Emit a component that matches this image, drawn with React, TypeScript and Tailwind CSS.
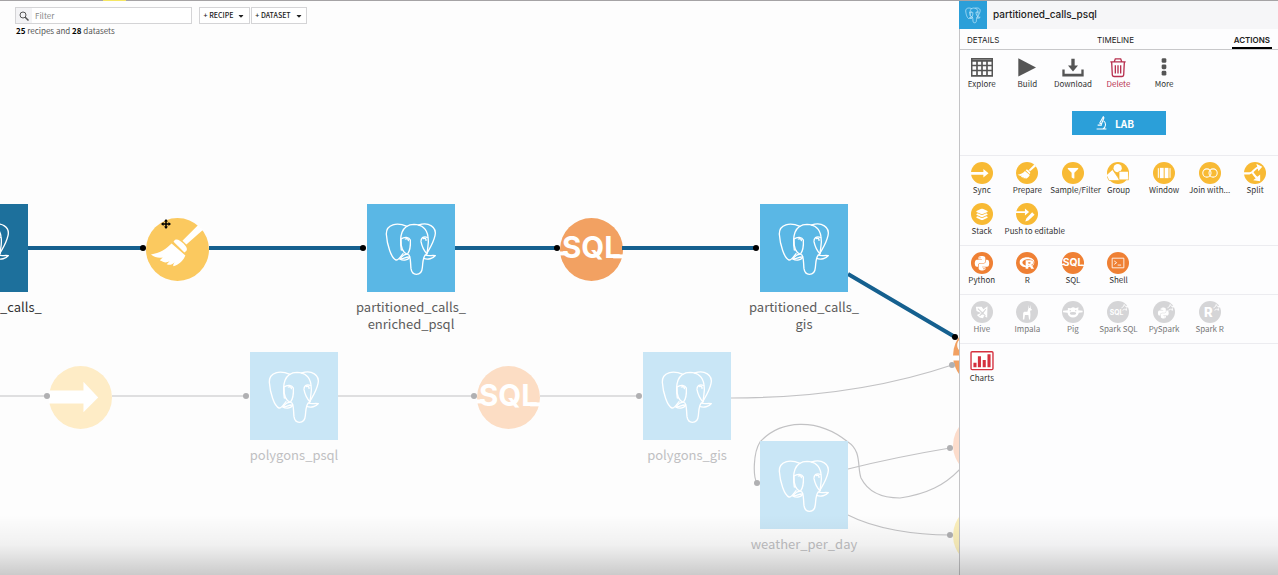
import React from "react";
import { FaPython, FaRProject, FaFilter, FaLayerGroup, FaCaretDown } from "react-icons/fa";

const cjk = "font-['Noto_Sans_CJK_SC','Noto_Sans',sans-serif]";

function Elephant({ className, strokeWidth = 4 }: { className: string; strokeWidth?: number }) {
  return (
    <svg viewBox="81 42 264 264" className={className} fill="none" stroke="currentColor" strokeWidth={strokeWidth} strokeLinecap="round" strokeLinejoin="round" aria-hidden="true">
      <path d="M201 109C172 97 138 101 139 133C141 165 154 205 168 210C176 211 182 199 189 191" />
      <path d="M184 180C178 140 183 104 222 103C248 104 261 120 264 140C268 162 262 176 261 190" />
      <path d="M236 105C266 95 291 111 285 137C279 163 267 178 259 193" />
      <path d="M183 147C194 139 207 141 211 150C212 166 211 182 202 193C188 188 182 174 183 147Z" />
      <path d="M196 147c5-2 10 0 9 5" />
      <path d="M262 142C250 137 242 145 243 155C246 170 252 182 261 192M251 146c4-2 8 0 7 5" />
      <path d="M199 193C189 193 185 201 179 207C190 213 207 211 209 200" />
      <path d="M182 207C190 207 197 202 205 201" />
      <path d="M206 194C213 200 211 220 213 236C215 249 220 253 229 253C241 253 246 247 247 233C249 216 248 204 256 195" />
      <path d="M256 195C265 199 276 195 286 197C279 206 263 210 251 205" />
    </svg>
  );
}

function Broom() {
  return (
    <g fill="#fff">
      <path d="M53 7L37 23L41 27L58 12A32 32 0 0 0 53 7Z" />
      <path d="M28 24C30 20 34 22 38 26C42 30 43 33 39 35Z" />
      <path d="M26 26L40 38C38 43 34 47 28 49C27 48 28 47 29 45C26 48 24 48 21 47L24 44C20 46 18 45 14 43L17 40C13 41 9 40 5 37C14 36 20 32 26 26Z" />
    </g>
  );
}

function SqlGlyph({ color }: { color: string }) {
  return (
    <g fill={color}>
      <text x="32" y="41" textAnchor="middle" fontSize="30" fontWeight="700" className="font-['Inter',sans-serif]">SQL</text>
      <rect x="0" y="34" width="6" height="4" />
      <rect x="54" y="37" width="10" height="4" />
    </g>
  );
}

function Disc({ fill, children, className }: { fill: string; children?: React.ReactNode; className: string }) {
  return (
    <svg viewBox="0 0 64 64" className={className} aria-hidden="true">
      <circle cx="32" cy="32" r="32" fill={fill} />
      {children}
    </svg>
  );
}

const arrow = <path d="M0 25H35V16L50 32L35 47V38H0Z" fill="#fff" />;

function DatasetNode({ place, tile, label, text, align = "items-center" }: { place: string; tile: string; label: string; text: string; align?: string }) {
  return (
    <div className={`absolute flex w-[88px] flex-col ${align} ${place}`}>
      <div className={`size-[88px] ${tile}`}>
        <Elephant className="size-full text-white" />
      </div>
      <p className={`mt-1.5 text-center text-[13px] leading-[17px] whitespace-pre ${cjk} ${text}`}>{label}</p>
    </div>
  );
}

function FlowCanvas() {
  return (
    <div className="absolute inset-0 overflow-hidden">
      <svg className="absolute top-0 left-0 h-[575px] w-[1278px]" fill="none" aria-hidden="true">
        <g stroke="#c2c2c4" strokeWidth="1.2">
          <path d="M0 396H46M112 396H246M338 396H474M540 396H639" />
          <path d="M731 398C820 398 890 386 952 365" />
          <path d="M757 483C753 477 753 453 760 442C780 420 817 417 848 442C862 451 857 467 861 478C868 492 883 498 900 498C927 494 945 485 960 469" />
          <path d="M848 469C880 461 920 453 950 448" />
          <path d="M848 515C875 529 915 535 950 535" />
        </g>
      </svg>
      <Disc fill="#fbc95f" className="absolute top-[218px] left-[146px] size-[63px]"><Broom /></Disc>
      <Disc fill="#f2a162" className="absolute top-[218px] left-[560px] size-[63px]"><SqlGlyph color="#fff" /></Disc>
      <Disc fill="#feecc6" className="absolute top-[366px] left-[49px] size-[63px]">{arrow}</Disc>
      <Disc fill="#fcddc4" className="absolute top-[366px] left-[477px] size-[63px]"><SqlGlyph color="#fff" /></Disc>
      <Disc fill="#f2a162" className="absolute top-[324px] left-[953px] size-[63px]">
        <path d="M0 32H8V37H0ZM8 15C3 18 3 25 8 28Z" fill="#fff" />
      </Disc>
      <Disc fill="#fcdccb" className="absolute top-[414px] left-[953px] size-[63px]" />
      <Disc fill="#fbefbb" className="absolute top-[504px] left-[953px] size-[63px]" />
      <svg className="absolute top-0 left-0 h-[575px] w-[1278px]" fill="none" aria-hidden="true">
        <g stroke="#15608f" strokeWidth="4">
          <path d="M27 248H143M209 248H363M455 248H557M622 248H756M848 274L955 337" />
        </g>
        <g fill="#000">
          <circle cx="143" cy="248" r="3" />
          <circle cx="363" cy="248" r="3" />
          <circle cx="557" cy="248" r="3" />
          <circle cx="756" cy="248" r="3" />
          <circle cx="955" cy="337" r="3" />
        </g>
        <g fill="#b0b0b2">
          <circle cx="47" cy="396" r="3" />
          <circle cx="246" cy="396" r="3" />
          <circle cx="474" cy="396" r="3" />
          <circle cx="639" cy="396" r="3" />
          <circle cx="952" cy="365" r="3" />
          <circle cx="757" cy="483" r="3" />
          <circle cx="950" cy="448" r="3" />
          <circle cx="950" cy="535" r="3" />
        </g>
      </svg>
      <DatasetNode place="top-[204px] left-[-60px]" tile="bg-[#1d709c]" label="_calls_" text="text-[#333] ml-[60px]" align="items-start" />
      <DatasetNode place="top-[204px] left-[367px]" tile="bg-[#5ab7e5]" label={"partitioned_calls_\nenriched_psql"} text="text-[#5c5c5c]" />
      <DatasetNode place="top-[204px] left-[760px]" tile="bg-[#5ab7e5]" label={"partitioned_calls_\ngis"} text="text-[#5c5c5c]" />
      <DatasetNode place="top-[352px] left-[250px]" tile="bg-[#c9e6f6]" label="polygons_psql" text="text-[#c0c0c2]" />
      <DatasetNode place="top-[352px] left-[643px]" tile="bg-[#c9e6f6]" label="polygons_gis" text="text-[#c0c0c2]" />
      <DatasetNode place="top-[441px] left-[760px]" tile="bg-[#c9e6f6]" label="weather_per_day" text="text-[#c0c0c2]" />
      <svg viewBox="0 0 20 20" className="absolute top-[219px] left-[161px] size-[10px]" aria-hidden="true">
        <path d="M10 0L14 5H11.500V8.500H15V6L20 10L15 14V11.500H11.500V15H14L10 20L6 15H8.500V11.500H5V14L0 10L5 6V8.500H8.500V5H6Z" fill="#000" />
      </svg>
    </div>
  );
}

function AddButton({ children, className }: { children: React.ReactNode; className: string }) {
  return (
    <button type="button" className={`flex h-[17px] items-center justify-center gap-1 border border-[#d4d4d6] bg-white text-[7px] font-medium whitespace-nowrap text-[#222] ${cjk} ${className}`}>
      {children}
      <FaCaretDown className="size-2" />
    </button>
  );
}

const amber = "#f8ba34";
const orange = "#ef8034";
const grey = "#d5d5d7";
const disc = "mx-auto size-[22px]";
const tool = "mx-auto h-[21px] w-[22px]";

type Item = { label: string; icon: React.ReactNode };

const mainActions: Item[] = [
  {
    label: "Explore",
    icon: (
      <svg viewBox="0 0 66 60" className={tool} fill="none" stroke="#555" strokeWidth="5" aria-hidden="true">
        <path d="M2 4H64V55H2ZM2 10H64M2 24H64M2 39H64M18 10V55M33 10V55M48 10V55" />
      </svg>
    ),
  },
  {
    label: "Build",
    icon: (
      <svg viewBox="0 0 66 60" className={tool} aria-hidden="true"><path d="M7 2L60 30L7 57Z" fill="#555" /></svg>
    ),
  },
  {
    label: "Download",
    icon: (
      <svg viewBox="0 0 66 60" className={tool} fill="#555" aria-hidden="true">
        <path d="M28 4H38V24H48L33 42L18 24H28ZM1 36H8V49H58V36H65V57H1Z" />
      </svg>
    ),
  },
  {
    label: "Delete",
    icon: (
      <svg viewBox="0 0 66 60" className={tool} fill="none" stroke="#b8304f" strokeWidth="4" aria-hidden="true">
        <path d="M10 13H56M22 12L25 4H41L44 12M14 14L16 53Q17 57 21 57H45Q49 57 50 53L52 14M25 23V48M33 23V48M41 23V48" />
      </svg>
    ),
  },
  {
    label: "More",
    icon: (
      <svg viewBox="0 0 66 60" className={tool} fill="#555" aria-hidden="true">
        <rect x="26" y="2" width="14" height="14" rx="4" /><rect x="26" y="21" width="14" height="14" rx="4" /><rect x="26" y="40" width="14" height="14" rx="4" />
      </svg>
    ),
  },
];

const visualRecipes: Item[] = [
  { label: "Sync", icon: <Disc fill={amber} className={disc}><path d="M0 29H36V20L51 33L36 45V37H0Z" fill="#fff" /></Disc> },
  { label: "Prepare", icon: <Disc fill={amber} className={disc}><Broom /></Disc> },
  { label: "Sample/Filter", icon: <Disc fill={amber} className={disc}><FaFilter x="16" y="17" width="32" height="32" size={32} color="#fff" /></Disc> },
  {
    label: "Group",
    icon: (
      <Disc fill={amber} className={disc}>
        <circle cx="31" cy="18" r="12" fill="#fff" />
        <g fill="#fff" stroke={amber} strokeWidth="2"><path d="M-2 38L16 22L38 54H6Z" /><rect x="35" y="27" width="27" height="25" /></g>
      </Disc>
    ),
  },
  {
    label: "Window",
    icon: (
      <Disc fill={amber} className={disc}>
        <g fill="#fff"><rect x="14" y="18" width="3" height="28" /><rect x="20" y="17" width="11" height="30" /><rect x="34" y="17" width="11" height="30" /><rect x="48" y="18" width="3" height="28" /></g>
      </Disc>
    ),
  },
  {
    label: "Join with...",
    icon: (
      <Disc fill={amber} className={disc}>
        <g fill="none" stroke="#fff" strokeWidth="3"><circle cx="23" cy="32" r="12" /><circle cx="41" cy="32" r="12" /></g>
      </Disc>
    ),
  },
  {
    label: "Split",
    icon: (
      <Disc fill={amber} className={disc}>
        <g fill="none" stroke="#fff" strokeWidth="6"><path d="M0 33H16C28 33 30 15 44 15M25 31C31 39 32 45 42 48" /></g>
        <path d="M36 5L53 14L42 27ZM47 36V56L27 53Z" fill="#fff" />
      </Disc>
    ),
  },
  { label: "Stack", icon: <Disc fill={amber} className={disc}><FaLayerGroup x="15" y="16" width="34" height="34" size={34} color="#fff" /></Disc> },
  {
    label: "Push to editable",
    icon: (
      <Disc fill={amber} className={disc}>
        <path d="M0 24H26V16L38 26L26 36V29H0ZM47 27L54 34L36 51L27 54L30 45Z" fill="#fff" />
      </Disc>
    ),
  },
];

const codeRecipes: Item[] = [
  { label: "Python", icon: <Disc fill={orange} className={disc}><FaPython x="8" y="9" width="48" height="48" size={48} color="#fff" /></Disc> },
  { label: "R", icon: <Disc fill={orange} className={disc}><FaRProject x="10" y="10" width="44" height="44" size={44} color="#fff" /></Disc> },
  { label: "SQL", icon: <Disc fill={orange} className={disc}><SqlGlyph color="#fff" /></Disc> },
  {
    label: "Shell",
    icon: (
      <Disc fill={orange} className={disc}>
        <path d="M15 18H49V46H15ZM21 26L28 31L21 36M31 38H41" fill="none" stroke="#fff" strokeWidth="2.500" />
      </Disc>
    ),
  },
];

const spark = <path d="M42 20L48 16L50 10L54 16L61 16L56 21L57 27L51 24L45 27" fill="none" stroke="#fff" strokeWidth="2.500" />;

const hadoopRecipes: Item[] = [
  {
    label: "Hive",
    icon: (
      <Disc fill={grey} className={disc}>
        <path d="M14 17L31 17L36 24L48 15L47 49L38 43L35 50L25 48L17 41L29 35L16 29Z" fill="#fff" />
        <path d="M20 22L42 43M31 40L43 24M25 43L37 31" stroke={grey} strokeWidth="3" />
      </Disc>
    ),
  },
  {
    label: "Impala",
    icon: (
      <Disc fill={grey} className={disc}>
        <path d="M36 11L38 20H41L44 10L43 22L47 26L41 28L42 39L41 54H38L36 41H26L24 54H20L21 34L24 31H33L36 22Z" fill="#fff" />
      </Disc>
    ),
  },
  {
    label: "Pig",
    icon: (
      <Disc fill={grey} className={disc}>
        <path d="M17 20L26 21Q32 16 39 21L48 18L47 27L60 28V33L49 34Q45 48 32 48Q19 48 16 34L3 33V28L17 27Z" fill="#fff" />
        <ellipse cx="32" cy="36" rx="9" ry="4" fill={grey} /><circle cx="24" cy="28" r="2" fill={grey} /><circle cx="40" cy="28" r="2" fill={grey} />
      </Disc>
    ),
  },
  {
    label: "Spark SQL",
    icon: (
      <Disc fill={grey} className={disc}>
        <text x="28" y="42" textAnchor="middle" fontSize="20" fontWeight="700" fill="#fff" className="font-['Inter',sans-serif]">SQL</text>
        {spark}
      </Disc>
    ),
  },
  {
    label: "PySpark",
    icon: <Disc fill={grey} className={disc}><FaPython x="12" y="17" width="36" height="36" size={36} color="#fff" />{spark}</Disc>,
  },
  {
    label: "Spark R",
    icon: (
      <Disc fill={grey} className={disc}>
        <text x="27" y="47" textAnchor="middle" fontSize="38" fontWeight="800" fill="#fff" className="font-['Inter',sans-serif]">R</text>
        {spark}
      </Disc>
    ),
  },
];

const chartActions: Item[] = [
  {
    label: "Charts",
    icon: (
      <svg viewBox="0 0 70 64" className="mx-auto h-[22px] w-6" aria-hidden="true">
        <rect x="3" y="5" width="64" height="52" rx="3" fill="#fff" stroke="#d5303e" strokeWidth="4" />
        <path d="M10 37H19V50H10ZM23 18H32V50H23ZM37 29H46V50H37ZM51 12H60V50H51Z" fill="#d5303e" />
      </svg>
    ),
  },
];

function ActionGrid({ items, tone = "text-[#333]" }: { items: Item[]; tone?: string }) {
  return (
    <div className="-ml-px grid grid-cols-7">
      {items.map((item) => (
        <button key={item.label} type="button" className={`block w-full pb-[7px] text-left text-[8px] leading-3 ${cjk} ${item.label === "Delete" ? "text-[#b8304f]" : tone}`}>
          {item.icon}
          <span className="block text-center whitespace-nowrap">{item.label}</span>
        </button>
      ))}
    </div>
  );
}

const section = "border-t border-[#ececf0] pt-1.5 pb-px";

function SidePanel() {
  return (
    <aside className="relative z-10 w-[319px] shrink-0 border-l border-[#c4c4c6] bg-[#fdfdfe]">
      <header className="flex h-[29px] items-center gap-1.5 bg-[#f6f6f8]">
        <div className="-ml-px h-full w-7 bg-[#2b9fd9] p-px pt-0.5">
          <Elephant className="size-[26px] text-[#b5e2f7]" strokeWidth={8} />
        </div>
        <h1 className="pb-px font-['Inter',sans-serif] text-[10px] font-medium text-[#222]">partitioned_calls_psql</h1>
      </header>
      <nav className="flex h-[21px] items-end justify-between border-b border-[#c8c8ca] pr-1.5 pl-[7px] font-['Inter',sans-serif] text-[8px] leading-[13px] text-[#222]">
        <a href="#details" className="pb-0.5">DETAILS</a>
        <a href="#timeline" className="pb-0.5">TIMELINE</a>
        <a href="#actions" className="border-b-2 border-black px-0.5 font-semibold">ACTIONS</a>
      </nav>
      <div className="pt-[7px]"><ActionGrid items={mainActions} /></div>
      <div className="flex justify-center pt-3.5 pb-5">
        <button type="button" className={`flex h-6 w-[94px] items-center justify-center gap-2 bg-[#2b9fd9] pr-2 text-[10px] font-bold text-white ${cjk}`}>
          <svg viewBox="0 0 30 40" className="h-3.5 w-[11px]" fill="none" stroke="#fff" strokeWidth="3" aria-hidden="true">
            <path d="M20 2L10 20L15 23L22 5ZM4 26H16M1 37H29M21 14C29 19 28 32 19 37" />
          </svg>
          LAB
        </button>
      </div>
      <section className={section}><ActionGrid items={visualRecipes} /></section>
      <section className={section}><ActionGrid items={codeRecipes} /></section>
      <section className={section}><ActionGrid items={hadoopRecipes} tone="text-[#777]" /></section>
      <section className={section}><ActionGrid items={chartActions} /></section>
    </aside>
  );
}

export default function App() {
  return (
    <div className="relative flex min-h-screen overflow-hidden bg-[#fdfdfd]">
      <main className="relative min-w-0 flex-1">
        <FlowCanvas />
        <div className="relative px-[15px] pt-[7px]">
          <div className="flex">
            <label className="flex h-[17px] w-[177px] border border-[#d4d4d6] bg-white">
              <span className="flex w-4 items-center justify-center bg-[#f3f3f5]">
                <svg viewBox="0 0 20 20" className="size-2.5" fill="none" stroke="#555" strokeWidth="2" aria-hidden="true">
                  <circle cx="8" cy="8" r="6" /><path d="M12 12L19 19" strokeWidth="3" />
                </svg>
              </span>
              <input type="text" aria-label="Filter" placeholder="Filter" className={`min-w-0 flex-1 pl-[3px] text-[8px] outline-none placeholder:text-[#888] ${cjk}`} />
            </label>
            <AddButton className="ml-[7px] w-[51px]">+ RECIPE</AddButton>
            <AddButton className="ml-px w-14">+ DATASET</AddButton>
          </div>
          <p className={`pt-px pl-px text-[8px] leading-3 text-[#555] ${cjk}`}>
            <b className="text-black">25</b> recipes and <b className="text-black">28</b> datasets
          </p>
        </div>
      </main>
      <SidePanel />
      <div className="absolute inset-x-0 top-0 z-20 flex h-px bg-[#a5a3a5]">
        <div className="ml-[103px] w-[23px] bg-[#f5e663]" />
      </div>
      <div className="pointer-events-none absolute inset-x-0 bottom-0 z-20 h-[60px] bg-linear-to-b from-black/0 via-black/5 to-black/20" />
    </div>
  );
}
